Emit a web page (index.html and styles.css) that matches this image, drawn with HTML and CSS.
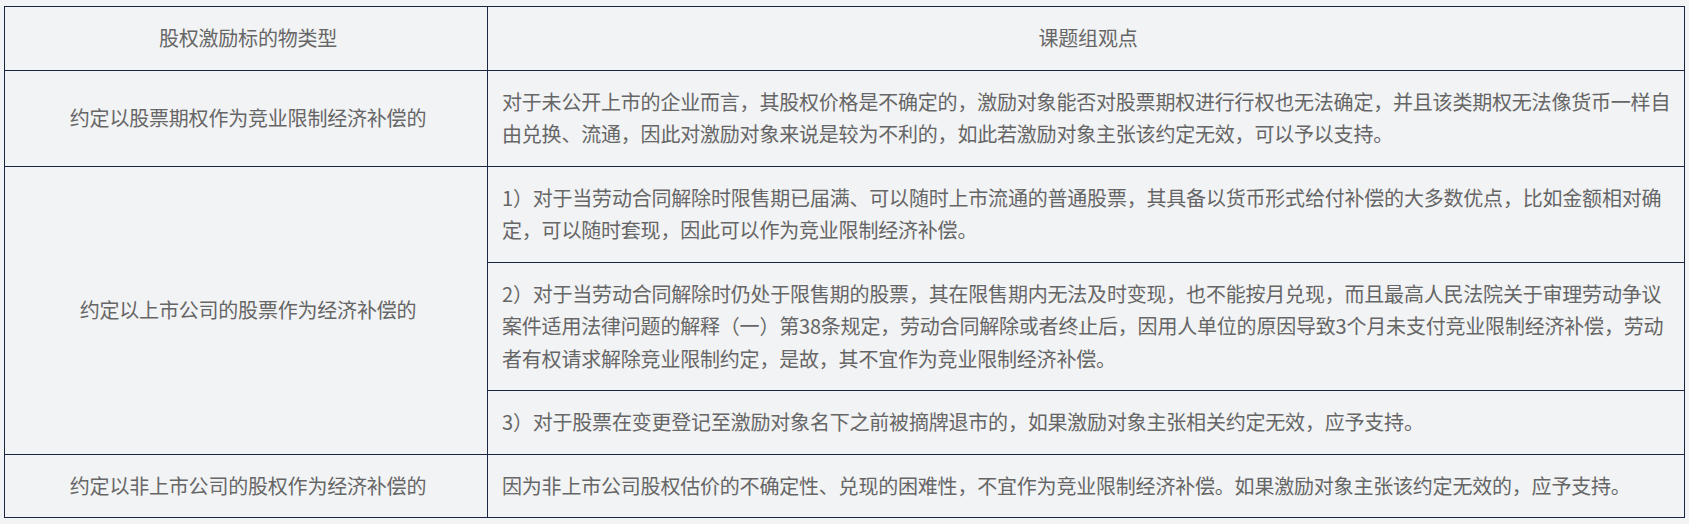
FILE: index.html
```html
<!DOCTYPE html>
<html lang="zh-CN">
<head>
<meta charset="utf-8">
<title>股权激励标的物类型</title>
<link rel="stylesheet" href="styles.css">
</head>
<body>
<div class="page">
<table class="grid">
  <colgroup>
    <col class="col-type">
    <col class="col-view">
  </colgroup>
  <thead>
    <tr>
      <th>股权激励标的物类型</th>
      <th>课题组观点</th>
    </tr>
  </thead>
  <tbody>
    <tr>
      <td class="type">约定以股票期权作为竞业限制经济补偿的</td>
      <td class="view">对于未公开上市的企业而言，其股权价格是不确定的，激励对象能否对股票期权进行行权也无法确定，并且该类期权无法像货币一样自由兑换、流通，因此对激励对象来说是较为不利的，如此若激励对象主张该约定无效，可以予以支持。</td>
    </tr>
    <tr>
      <td class="type" rowspan="3">约定以上市公司的股票作为经济补偿的</td>
      <td class="view">1）对于当劳动合同解除时限售期已届满、可以随时上市流通的普通股票，其具备以货币形式给付补偿的大多数优点，比如金额相对确定，可以随时套现，因此可以作为竞业限制经济补偿。</td>
    </tr>
    <tr>
      <td class="view">2）对于当劳动合同解除时仍处于限售期的股票，其在限售期内无法及时变现，也不能按月兑现，而且最高人民法院关于审理劳动争议案件适用法律问题的解释（一）第38条规定，劳动合同解除或者终止后，因用人单位的原因导致3个月未支付竞业限制经济补偿，劳动者有权请求解除竞业限制约定，是故，其不宜作为竞业限制经济补偿。</td>
    </tr>
    <tr>
      <td class="view">3）对于股票在变更登记至激励对象名下之前被摘牌退市的，如果激励对象主张相关约定无效，应予支持。</td>
    </tr>
    <tr>
      <td class="type">约定以非上市公司的股权作为经济补偿的</td>
      <td class="view">因为非上市公司股权估价的不确定性、兑现的困难性，不宜作为竞业限制经济补偿。如果激励对象主张该约定无效的，应予支持。</td>
    </tr>
  </tbody>
</table>
</div>
</body>
</html>
```

FILE: styles.css
```css
html, body {
  margin: 0;
  padding: 0;
  background: #f2f3f5;
}

.page {
  padding: 6px 4px 0 4px;
}

.grid {
  width: 1681px;
  border-collapse: collapse;
  table-layout: fixed;
  font-family: "Noto Sans CJK SC", "Microsoft YaHei", sans-serif;
  font-size: 20px;
  letter-spacing: -0.2px;
  line-height: 32.5px;
  color: #666666;
}

.col-type {
  width: 483px;
}

.grid th,
.grid td {
  border: 1px solid #1c2743;
  padding: 15px 10px 15px 14px;
  vertical-align: middle;
  font-weight: normal;
}

.grid th {
  text-align: center;
}

.type {
  text-align: center;
}

.view {
  text-align: left;
}
```
